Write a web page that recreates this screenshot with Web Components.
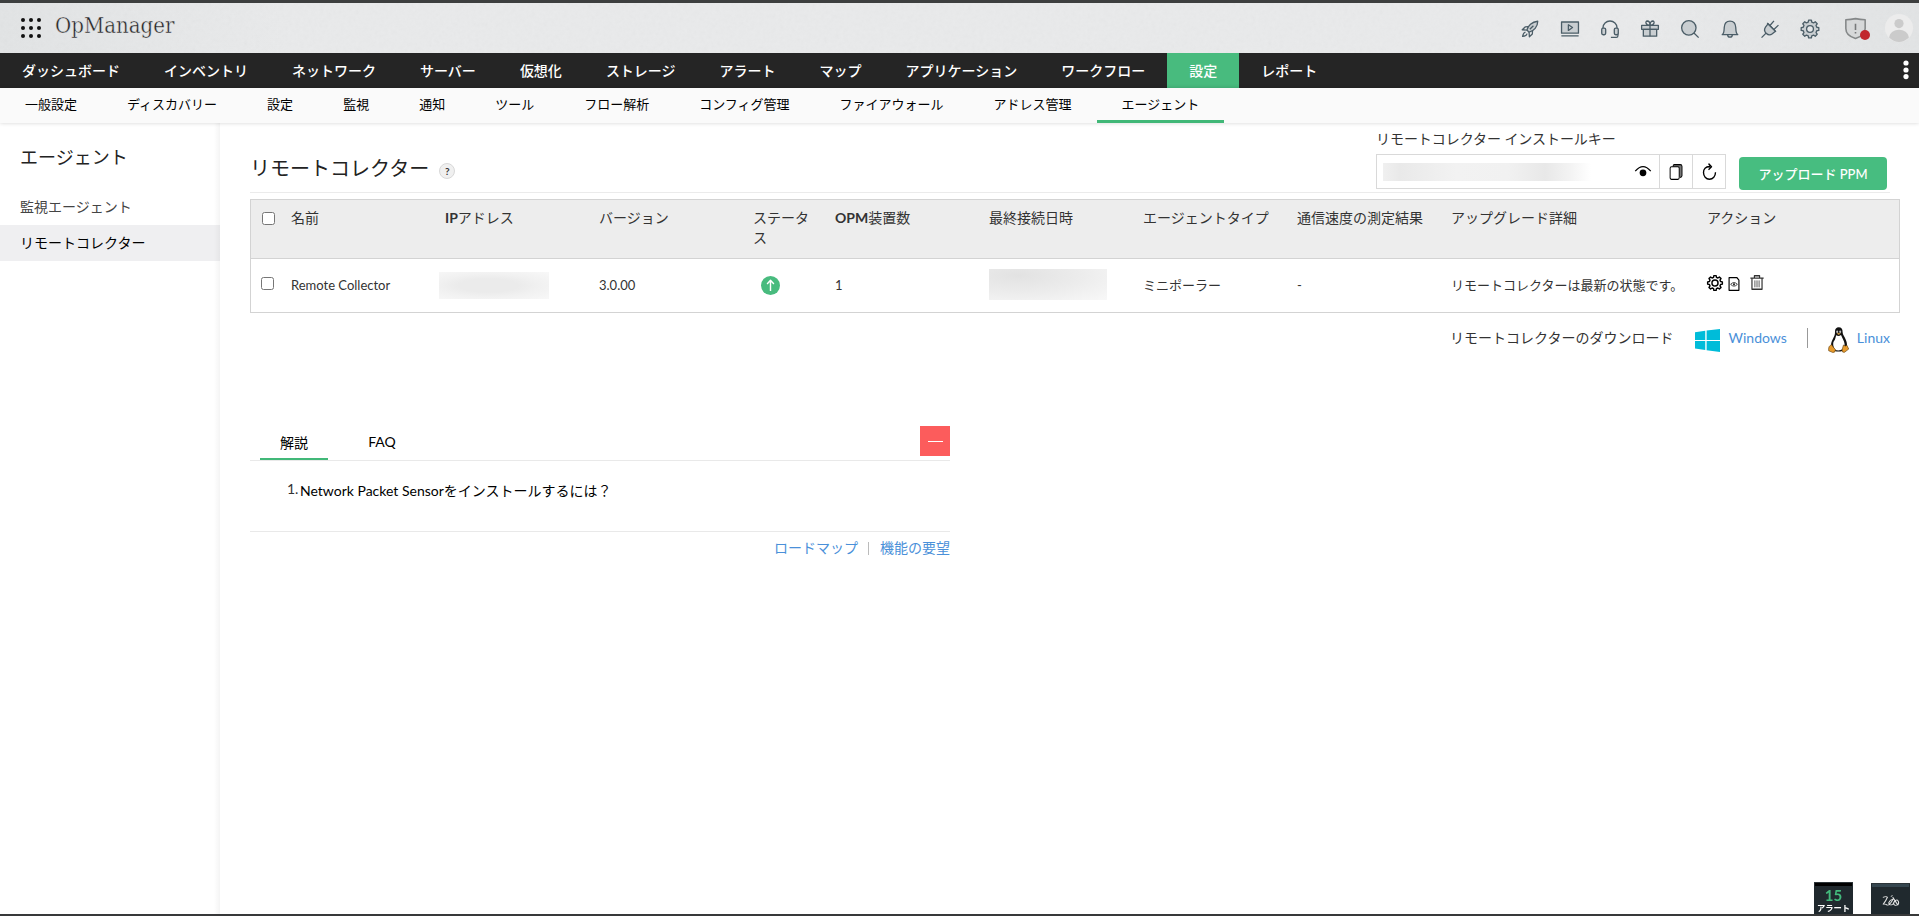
<!DOCTYPE html>
<html lang="ja">
<head>
<meta charset="utf-8">
<title>OpManager</title>
<style>
    html, body {
        margin: 0;
        height: 100%;
        overflow: hidden;
    }
    body {
        background: #fff;
        color: #333;
        font: 14px/20px Lato, "Noto Sans CJK JP", sans-serif;
    }
</style>
</head>
<body>
<opm-app></opm-app>

<script>
// Outline of a cog with soft teeth, centred in a 20x20 box
function gearPath(outer, inner, teeth) {
    const pts = [];
    const step = (Math.PI * 2) / teeth;
    for (let i = 0; i < teeth; i++) {
        const a = i * step - Math.PI / 2;
        [[-0.2, outer], [0.2, outer], [0.32, inner], [0.68, inner]].forEach(([k, r]) => {
            pts.push((10 + Math.cos(a + k * step) * r).toFixed(2) + ' ' + (10 + Math.sin(a + k * step) * r).toFixed(2));
        });
    }
    return 'M' + pts.join('L') + 'Z';
}

const F = 'fill="#c9ced1"';
const ICONS = {
    apps: [2, 10, 18].map(y => [2, 10, 18].map(x => `<circle cx="${x}" cy="${y}" r="2" fill="#111" stroke="none"/>`).join('')).join(''),
    rocket: `<path ${F} d="M6.6 11.2C7.7 6.5 12 2 18.6 1.4C18.6 7.5 14.2 12.2 9 13.6Z"/><path d="M8 7.4L4.6 7.7L1.4 10.9L6.6 11.2M12.8 12L12.6 15.5L9.3 18.7L9 13.6M9.8 10.3L13.8 6.3M5 13.4C3 13.8 2.2 16 1.8 18.3C4.4 18 6.4 17.2 6.8 15.2"/>`,
    play: `<rect ${F} x=".6" y="2.2" width="18.8" height="12.4"/><path d="M8.2 5.3V11.6L12.8 8.4ZM.4 17.6H19.6"/>`,
    headset: `<path d="M2.2 9.5V8.5A7.8 7.4 0 0 1 17.8 8.5V9.5M18.8 14V17.6Q18.8 19.4 17 19.4H11"/><rect ${F} x=".8" y="9" width="4.4" height="7.4" rx="1.6"/><rect ${F} x="14.8" y="9" width="4.4" height="7.4" rx="1.6"/>`,
    gift: `<rect ${F} x=".7" y="6" width="18.6" height="4.4"/><rect ${F} x="2.6" y="10.4" width="14.8" height="7.6"/><path d="M10 6V18M10 6C5 6 4.3 1.2 7 1.1C9.3 1.1 10 4 10 6C10 4 10.7 1.1 13 1.1C15.7 1.2 15 6 10 6"/>`,
    search: `<circle ${F} cx="8.7" cy="8.7" r="8"/><path d="M14.4 14.4L19.6 19.6"/>`,
    bell: `<path ${F} d="M1.4 16.3C3.5 15 3.4 12.2 3.6 8.3C3.8 4 6.4 1.3 10 1.3C13.6 1.3 16.2 4 16.4 8.3C16.6 12.2 16.5 15 18.6 16.3Z"/><path d="M7.4 16.5C7.6 19.8 12.4 19.8 12.6 16.5"/>`,
    plug: `<path ${F} d="M7.8 4.2L16 12.4L12.6 15.2C10.3 17 8 16.8 6 15C3.5 12.8 3.3 10.5 5 8Z"/><path d="M.6 19.6L5.6 14.6M10.2 5.8L14.4 1M14.6 10.2L19.4 5.7M6.9 3.4L16.7 13.2"/>`,
    gear: `<path ${F} d="${gearPath(9.9, 7.8, 8)}"/><circle fill="#e5e7e9" cx="10" cy="10" r="3.8"/>`,
    gearDark: `<path d="${gearPath(9.3, 7.2, 8)}"/><circle cx="10" cy="10" r="3.8"/>`,
    shield: `<path fill="#d6d8d9" stroke="#858889" d="M.8 1.6Q5.5 1.6 10 .6Q14.5 1.6 19.2 1.6V10C19.2 14.8 15.2 18 10 19.5C4.8 18 .8 14.8 .8 10Z"/><path stroke="#77797a" d="M10 5.5V11.5M10 13.3V14.8"/>`,
    avatar: `<circle cx="10" cy="10" r="10" fill="#ececec" stroke="none"/><g fill="#cbcbcb" stroke="none"><circle cx="10" cy="6.8" r="3.3"/><path d="M3 17C3.4 9.3 16.6 9.3 17 17Q10 23 3 17"/></g>`,
    eye: `<path stroke-width="1.5" d="M.3 9Q10 -2.5 19.7 9"/><circle cx="10" cy="11" r="4.2" fill="#000" stroke="none"/>`,
    copy: `<path fill="#777" stroke-width="1.3" d="M6 3.6V2.4Q6 .8 7.6 .8H16Q18.6 .8 18.6 3V14.6Q18.6 16.6 15.6 16.8"/><rect fill="#fff" stroke-width="1.4" x="1.6" y="3.4" width="13" height="15.8" rx="2"/>`,
    refresh: `<path d="M11 4.3C4.5 3.8 2 7.5 2 11.2C2 15.4 5.2 19 9.9 19C14.7 19 18 15.5 18 11M8.7 .8L12.7 4.4L8.7 8"/>`,
    report: `<path d="M1.8 1H15L18.2 4.5V19H1.8Z"/><path stroke-width="1.1" d="M4.4 10.5Q10 5.4 15.6 10.5Q10 15.6 4.4 10.5Z"/><circle cx="10" cy="10.5" r="1.5" fill="#000" stroke="none"/>`,
    trash: `<path stroke="#333" stroke-width="1.7" d="M.5 4.3H19.5M6.3 4V1H13.7V4M2.8 4.5V19H17.2V4.5"/><path stroke="#444" stroke-width="1.2" d="M7 7.2V16.4M10 7.2V16.4M13 7.2V16.4"/>`,
    up: `<circle cx="10" cy="10" r="10" fill="#48bb7e" stroke="none"/><path stroke="#fff" stroke-width="1.5" d="M10 15.8V5M6.4 8.3L10 4.6L13.6 8.3"/>`,
    windows: `<path fill="#00bcd9" stroke="none" d="M0 2.8L8.2 1.6V9.5H0ZM9.3 1.4L20 0V9.5H9.3ZM0 10.5H8.2V18.2L0 17ZM9.3 10.5H20V20L9.3 18.5Z"/>`,
    zia: `<path stroke="#e6e6e6" d="M1 4Q5 2 6.4 3.6Q5 9 1.4 15.4Q4.6 14.4 6.2 17Q9 17.6 13 7Q9.4 8 8 12.6Q8 17.4 11.4 16.4Q13.6 15 14 12M10.4 2.6L12.4 .8M12.6 3.8L18.6 16.6Q14 18.6 13.6 14Q14.2 8.8 17.6 8Q21 11.8 18.6 16.6"/>`
};

class OpmIcon extends HTMLElement {
    connectedCallback() {
        const w = this.getAttribute('w') || 20;
        const h = this.getAttribute('h') || w;
        const line = this.getAttribute('line') || 1.2;
        this.attachShadow({ mode: 'open' }).innerHTML = `
            <style>
                :host { display: block; flex: none; width: ${w}px; height: ${h}px; }
                svg { display: block; overflow: visible; }
            </style>
            <svg width="${w}" height="${h}" viewBox="0 0 20 20" preserveAspectRatio="none" fill="none"
                 stroke="currentColor" stroke-width="${line}" stroke-linejoin="round">${ICONS[this.getAttribute('name')]}</svg>
        `;
    }
}
customElements.define('opm-icon', OpmIcon);

class OpmTux extends HTMLElement {
    connectedCallback() {
        this.attachShadow({ mode: 'open' }).innerHTML = `
            <style>
                :host { display: block; flex: none; width: 21px; height: 26px; }
                svg { display: block; }
            </style>
            <svg width="21" height="26" viewBox="0 0 21 26">
                <path fill="#111" d="M7 5C6.8 1.8 8.5 .3 10.7 .3C13.3 .3 14.7 2 14.6 5C14.5 8.5 19 12 19 18C19 22 16 24.5 10.5 24.5C5 24.5 2.5 22 3 17.5C3.6 12.5 7.3 9.5 7 5Z"/>
                <path fill="#fff" d="M8.2 8.3Q10.7 10 13 8L16 14.5Q17.5 19 15 22Q10.5 24.8 6.5 22.2Q3.6 16.5 7 12.5Z"/>
                <ellipse cx="9.2" cy="4.8" rx="1" ry="1.2" fill="#bbb"/><ellipse cx="12.2" cy="4.8" rx="1" ry="1.2" fill="#bbb"/>
                <path fill="#b98a3a" d="M8.6 6.6L10.7 5.8L12.9 6.6L10.7 8Z"/>
                <path fill="#e79a2b" stroke="#5b3a0c" stroke-width=".6" d="M3.3 17.5L7.4 22.7Q7.6 25.6 4.8 25.5L.7 23.8Q.3 22.5 1 19.8ZM15.5 18Q17.5 20 19 18.3L20.7 22.1L16.5 25.3Q13.8 25.8 14 23Z"/>
            </svg>
        `;
    }
}
customElements.define('opm-tux', OpmTux);

class OpmHeader extends HTMLElement {
    connectedCallback() {
        const tools = ['rocket', 'play', 'headset', 'gift', 'search', 'bell', 'plug', 'gear'];
        this.attachShadow({ mode: 'open' }).innerHTML = `
            <style>
                :host {
                    display: flex;
                    align-items: center;
                    box-sizing: border-box;
                    height: 53px;
                    padding: 0 6px 0 21px;
                    border-top: 3px solid #3d3f3f;
                    background: linear-gradient(90deg, #e2e4e5, #e9eaeb 15%, #e9eaeb 85%, #e2e4e5);
                    position: relative;
                    color: #4b5d67;
                }
                /* paper grain behind the bar contents */
                .grain { position: absolute; inset: 0; width: 100%; height: 100%; opacity: .05; }
                h1 {
                    flex: 1;
                    margin: -4px 0 0 14px;
                    font: 300 22px/30px "Roboto Slab", "DejaVu Serif Condensed", "DejaVu Serif", serif;
                    font-stretch: condensed;
                    color: #222;
                    -webkit-text-stroke: .4px #e3e5e6;
                    position: relative;
                }
                .tools { display: flex; gap: 22px; margin-right: 26px; padding-top: 1px; position: relative; }
                .shield { position: relative; margin-right: 19px; }
                .shield i { position: absolute; right: -4px; bottom: -1px; width: 10px; height: 10px; border-radius: 50%; background: #c1272d; }
                opm-icon { position: relative; }
            </style>
            <svg class="grain"><filter id="g"><feTurbulence type="fractalNoise" baseFrequency=".25" numOctaves="3"/><feColorMatrix type="saturate" values="0"/></filter><rect width="100%" height="100%" filter="url(#g)"/></svg>
            <opm-icon name="apps" w="20"></opm-icon>
            <h1>OpManager</h1>
            <div class="tools">${tools.map(t => `<opm-icon name="${t}" w="18" h="18" line="1.45"></opm-icon>`).join('')}</div>
            <div class="shield"><opm-icon name="shield" w="21" h="21" line="1.5"></opm-icon><i></i></div>
            <opm-icon name="avatar" w="28"></opm-icon>
        `;
    }
}
customElements.define('opm-header', OpmHeader);

// Horizontal menu; items are comma separated, "active" is the selected one
class OpmNav extends HTMLElement {
    connectedCallback() {
        const active = this.getAttribute('active');
        const items = this.getAttribute('items').split(',');
        this.attachShadow({ mode: 'open' }).innerHTML = `
            <style>
                :host { display: flex; height: 35px; line-height: 36px; }
                span { padding: 0 22px; white-space: nowrap; }
                .more { margin-left: auto; padding: 7px 10px 0 0; }
                .more svg { display: block; }
                :host([kind="main"]) { background: #252525; color: #fff; font-weight: 500; }
                :host([kind="main"]) .on { background: #48bb7e; }
                :host([kind="sub"]) {
                    background: #fafafa;
                    color: #000;
                    font-size: 13px;
                    line-height: 33px;
                    box-shadow: 0 0 4px rgba(0, 0, 0, .18);
                    position: relative;
                }
                :host([kind="sub"]) span { padding: 0 25px; box-sizing: border-box; }
                :host([kind="sub"]) .on { border-bottom: 3px solid #41b878; }
                :host([kind="sub"]) .more { display: none; }
            </style>
            ${items.map(i => `<span class="${i === active ? 'on' : ''}">${i}</span>`).join('')}
            <div class="more"><svg width="6" height="20" fill="#fff"><circle cx="3" cy="3" r="2.6"/><circle cx="3" cy="10" r="2.6"/><circle cx="3" cy="16.6" r="2.6"/></svg></div>
        `;
    }
}
customElements.define('opm-nav', OpmNav);

class OpmSidebar extends HTMLElement {
    connectedCallback() {
        this.attachShadow({ mode: 'open' }).innerHTML = `
            <style>
                :host {
                    display: block;
                    flex: none;
                    box-sizing: border-box;
                    width: 220px;
                    padding-top: 20px;
                    background: linear-gradient(90deg, transparent 214px, rgba(0, 0, 0, .045) 220px) #fff;
                }
                h2 { margin: 0 0 18px 20px; font-size: 18px; line-height: 28px; font-weight: 400; color: #222; }
                div { padding-left: 20px; line-height: 36px; color: #444; }
                .on { background: linear-gradient(90deg, transparent 214px, rgba(0, 0, 0, .04) 220px) #efeff1; color: #000; }
            </style>
            <h2>エージェント</h2>
            <div>監視エージェント</div>
            <div class="on">リモートコレクター</div>
        `;
    }
}
customElements.define('opm-sidebar', OpmSidebar);

class InstallKey extends HTMLElement {
    connectedCallback() {
        this.attachShadow({ mode: 'open' }).innerHTML = `
            <style>
                :host { display: block; width: 350px; }
                label { display: block; line-height: 22px; margin-bottom: 4px; letter-spacing: -.06px; }
                .field { display: flex; box-sizing: border-box; height: 35px; border: 1px solid #d9d9d9; }
                .key { display: flex; flex: 1; align-items: center; justify-content: space-between; padding: 0 8px 0 6px; }
                .mask { width: 208px; height: 18px; background: linear-gradient(90deg, #f0f0f0, #e9e9e9 8%, #f2f2f2 35%, #f1f1f1 60%, #e8e8e8 78%, #f3f3f3 90%, #fff); }
                .cell { display: flex; align-items: center; justify-content: center; width: 32px; border-left: 1px solid #d9d9d9; color: #000; }
                opm-icon { color: #000; }
            </style>
            <label>リモートコレクター インストールキー</label>
            <div class="field">
                <div class="key"><div class="mask"></div><opm-icon name="eye" w="16" h="16" line="1.7"></opm-icon></div>
                <div class="cell"><opm-icon name="copy" w="14" h="16" line="1.6"></opm-icon></div>
                <div class="cell"><opm-icon name="refresh" w="15" h="17" line="1.8"></opm-icon></div>
            </div>
        `;
    }
}
customElements.define('install-key', InstallKey);

class CollectorTable extends HTMLElement {
    connectedCallback() {
        this.attachShadow({ mode: 'open' }).innerHTML = `
            <style>
                :host { display: block; border: 1px solid #d3d3d3; color: #333; }
                .row {
                    display: grid;
                    grid-template-columns: 40px 154px 154px 154px 82px 154px 154px 154px 154px 256px 1fr;
                    box-sizing: border-box;
                    height: 53px;
                    align-items: center;
                    padding-bottom: 2px;
                    font-size: 13px;
                }
                .row.head { height: 59px; padding: 8px 0 0; background: #ededed; border-bottom: 1px solid #d3d3d3; align-items: start; font-size: 14px; }
                .head b { font-weight: 700; }
                .head .st { width: 60px; }
                input { display: block; margin: 0 0 3px 10px; width: 13px; height: 13px; }
                .head input { margin: 4px 0 0 11px; }
                .ip { width: 110px; height: 27px; margin: 2px 0 0 -6px; background: radial-gradient(ellipse at 45% 50%, #ebebeb 35%, #f1f1f1 60%, #f8f8f8); }
                .date { width: 118px; height: 31px; background: radial-gradient(ellipse at 25% 20%, #e2e2e2, #ececec 50%, #f8f8f8); }
                .acts { display: flex; color: #000; padding-bottom: 3px; align-items: flex-end; }
                .acts opm-icon + opm-icon { margin-left: 5px; }
                .acts opm-icon:last-child { margin: 0 0 1px 10px; }
                .state { margin: 2px 0 0 8px; }
            </style>
            <div class="row head">
                <div><input type="checkbox"></div><div>名前</div><div><b>IP</b>アドレス</div><div>バージョン</div>
                <div class="st">ステータス</div><div><b>OPM</b>装置数</div><div>最終接続日時</div><div>エージェントタイプ</div>
                <div>通信速度の測定結果</div><div>アップグレード詳細</div><div>アクション</div>
            </div>
            <div class="row">
                <input type="checkbox"><div>Remote Collector</div><div class="ip"></div><div>3.0.00</div>
                <opm-icon class="state" name="up" w="19"></opm-icon><div>1</div><div class="date"></div><div>ミニポーラー</div>
                <div>-</div><div>リモートコレクターは最新の状態です。</div>
                <div class="acts"><opm-icon name="gearDark" w="16" line="1.8"></opm-icon><opm-icon name="report" w="12" h="14" line="1.9"></opm-icon><opm-icon name="trash" w="14" h="15" line="1.6"></opm-icon></div>
            </div>
        `;
    }
}
customElements.define('collector-table', CollectorTable);

class HelpPanel extends HTMLElement {
    connectedCallback() {
        this.attachShadow({ mode: 'open' }).innerHTML = `
            <style>
                :host { display: block; width: 700px; color: #000; }
                .tabs { display: flex; align-items: flex-start; height: 34px; padding-left: 10px; border-bottom: 1px solid #e9e9e9; }
                .tab { box-sizing: border-box; height: 34px; width: 68px; text-align: center; padding-top: 7px; }
                .tab.on { border-bottom: 2px solid #41b878; }
                .faq { margin-left: 20px; padding-top: 6px; }
                .min { display: flex; align-items: center; justify-content: center; width: 30px; height: 30px; margin-left: auto; background: #fc5c5c; }
                .min i { width: 15px; height: 1px; background: #fff; }
                .body { display: flex; box-sizing: border-box; height: 71px; padding: 20px 0 0 37px; border-bottom: 1px solid #e9e9e9; }
                .body span { width: 13px; margin-top: -2px; color: #333; }
                .links { display: flex; justify-content: flex-end; padding-top: 6px; color: #4a90d9; }
                .links i { width: 1px; height: 13px; margin: 4px 11px 0 10px; background: #bbb; }
            </style>
            <div class="tabs"><div class="tab on">解説</div><div class="tab faq">FAQ</div><div class="min"><i></i></div></div>
            <div class="body"><span>1.</span><div>Network Packet Sensorをインストールするには？</div></div>
            <div class="links"><a>ロードマップ</a><i></i><a>機能の要望</a></div>
        `;
    }
}
customElements.define('help-panel', HelpPanel);

class OpmDock extends HTMLElement {
    connectedCallback() {
        this.attachShadow({ mode: 'open' }).innerHTML = `
            <style>
                /* floats over the bottom right corner */
                :host { position: fixed; left: 0; right: 0; bottom: 0; display: flex; align-items: flex-end; justify-content: flex-end; gap: 18px; padding-right: 9px; border-bottom: 2px solid #38393a; }
                .box { box-sizing: border-box; width: 39px; height: 32px; background: #20292e; color: #fff; text-align: center; border-top: 1px solid #2c3438; }
                .box::before { content: ""; display: block; height: 3px; margin: 0 1px; background: #000; }
                .zia { height: 31px; display: flex; flex-direction: column; align-items: center; }
                .zia::before { align-self: stretch; background: #35464f; }
                .zia opm-icon { margin-top: 8px; }
                b { display: block; font-size: 15px; line-height: 18px; font-weight: 700; color: #43b97c; }
                small { display: block; font-size: 8.3px; line-height: 8px; font-weight: 600; white-space: nowrap; }
            </style>
            <div class="box"><b>15</b><small>アラート</small></div>
            <div class="box zia"><opm-icon name="zia" w="17" h="12" line="1.3"></opm-icon></div>
        `;
    }
}
customElements.define('opm-dock', OpmDock);

class OpmApp extends HTMLElement {
    connectedCallback() {
        this.attachShadow({ mode: 'open' }).innerHTML = `
            <style>
                :host { display: flex; flex-direction: column; height: 100vh; }
                .cols { display: flex; flex: 1; }
                main { flex: 1; padding: 5px 19px 0 30px; }
                .top { display: flex; align-items: flex-end; height: 64px; margin-right: 10px; border-bottom: 1px solid #ebebeb; }
                .title { display: flex; flex: 1; align-items: center; padding-bottom: 9px; }
                h2 { margin: 0; font-size: 20px; line-height: 30px; font-weight: 400; color: #222; }
                .q { box-sizing: border-box; width: 16px; height: 16px; margin: 5px 0 0 10px; border: 1px solid #d8d8d8; border-radius: 50%; background: #f0f0f0; font-size: 10px; line-height: 14px; font-weight: 700; text-align: center; }
                install-key { margin-bottom: 3px; }
                button { width: 148px; height: 33px; margin: 0 3px 2px 13px; padding: 0; border: 0; border-radius: 4px; background: #47bd80; color: #fff; font: 500 13px/32px Lato, "Noto Sans CJK JP", sans-serif; }
                collector-table { margin-top: 6px; }
                .get { display: flex; align-items: center; height: 26px; margin: 14px 10px 0 0; justify-content: flex-end; }
                .get a { color: #4a90d9; margin: 0 0 4px 9px; }
                .get span { margin: 0 21px 4px 0; }
                .get i { width: 1px; height: 20px; margin: 0 20px 4px 20px; background: #999; }
                .get opm-tux + a { margin-left: 8px; }
                help-panel { margin-top: 73px; }
            </style>
            <opm-header></opm-header>
            <opm-nav kind="main" active="設定" items="ダッシュボード,インベントリ,ネットワーク,サーバー,仮想化,ストレージ,アラート,マップ,アプリケーション,ワークフロー,設定,レポート"></opm-nav>
            <opm-nav kind="sub" active="エージェント" items="一般設定,ディスカバリー,設定,監視,通知,ツール,フロー解析,コンフィグ管理,ファイアウォール,アドレス管理,エージェント"></opm-nav>
            <div class="cols">
                <opm-sidebar></opm-sidebar>
                <main>
                    <div class="top">
                        <div class="title"><h2>リモートコレクター</h2><div class="q">?</div></div>
                        <install-key></install-key>
                        <button>アップロード PPM</button>
                    </div>
                    <collector-table></collector-table>
                    <div class="get">
                        <span>リモートコレクターのダウンロード</span>
                        <opm-icon name="windows" w="25" h="23"></opm-icon><a>Windows</a><i></i>
                        <opm-tux></opm-tux><a>Linux</a>
                    </div>
                    <help-panel></help-panel>
                </main>
            </div>
            <opm-dock></opm-dock>
        `;
    }
}
customElements.define('opm-app', OpmApp);
</script>
</body>
</html>
